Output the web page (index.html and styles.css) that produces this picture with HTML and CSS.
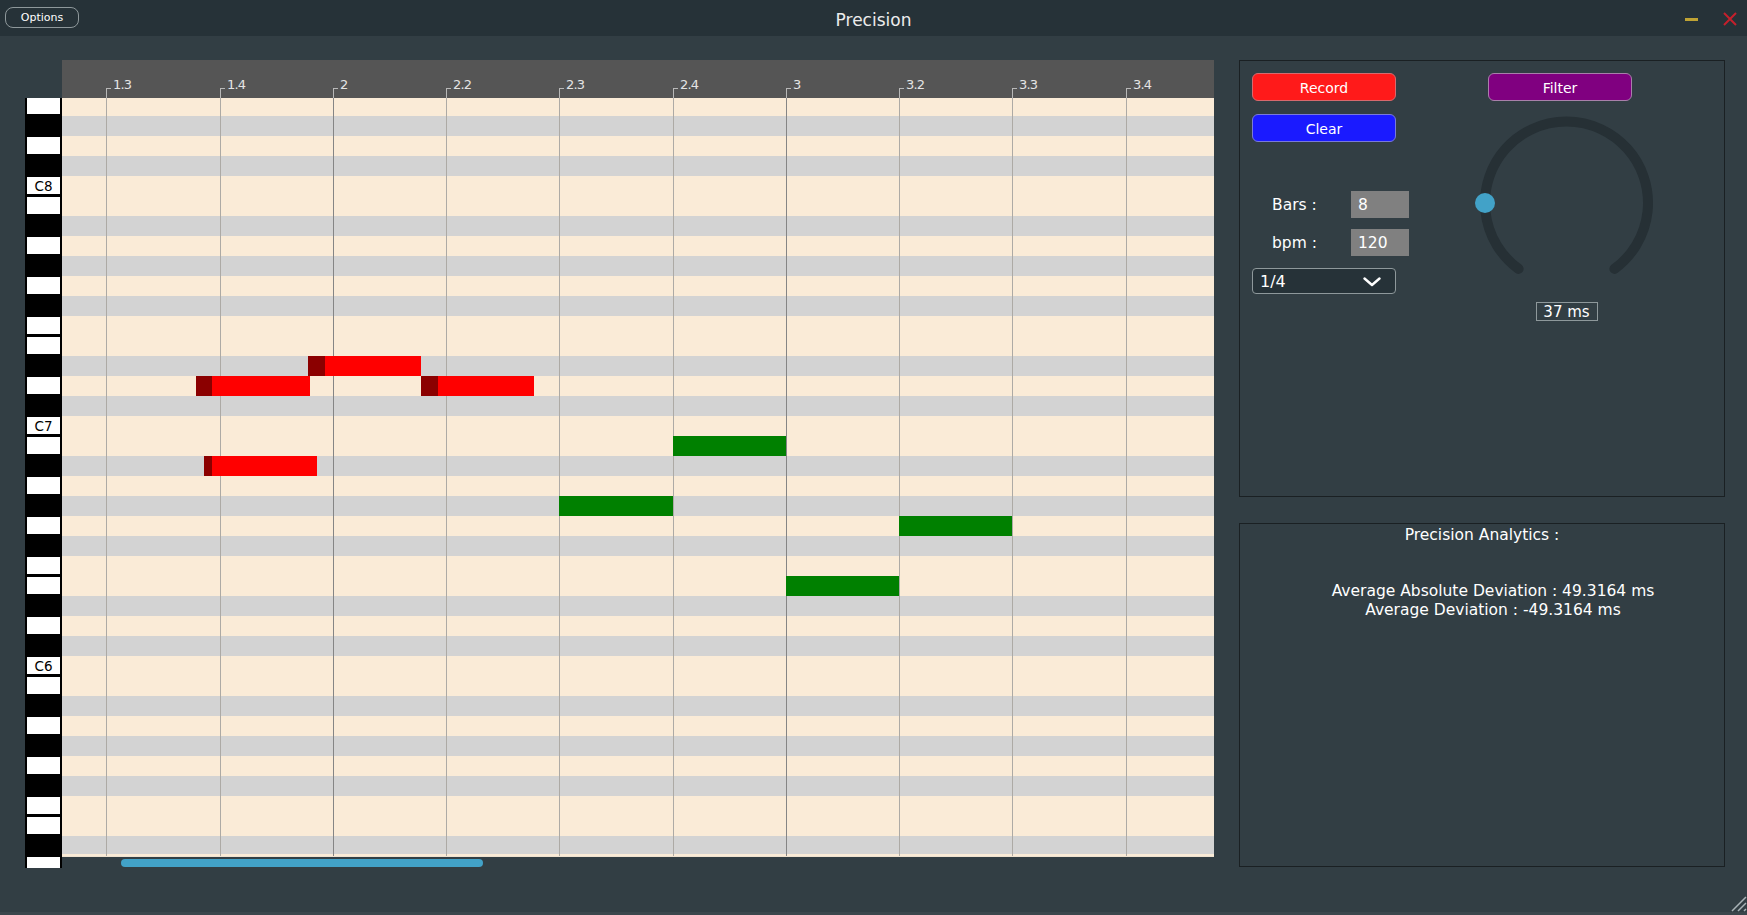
FILE: index.html
```html
<!DOCTYPE html>
<html>
<head>
<meta charset="utf-8">
<title>Precision</title>
<link rel="stylesheet" href="styles.css">
</head>
<body>
<div class="app">
  <header class="titlebar">
    <div class="tb-left"><button class="options">Options</button></div>
    <div class="title">Precision</div>
    <div class="tb-right">
      <span class="minimize"></span>
      <svg class="close" width="14" height="14" viewBox="0 0 14 14"><path d="M1 1 L13 13 M13 1 L1 13" stroke="#c4202c" stroke-width="2"/></svg>
    </div>
  </header>

  <main class="main">
    <section class="roll">
      <div class="corner"></div>
      <div class="ruler">
        <div class="tick" style="left:44px"><span>1.3</span></div>
        <div class="tick" style="left:158px"><span>1.4</span></div>
        <div class="tick" style="left:271px"><span>2</span></div>
        <div class="tick" style="left:384px"><span>2.2</span></div>
        <div class="tick" style="left:497px"><span>2.3</span></div>
        <div class="tick" style="left:611px"><span>2.4</span></div>
        <div class="tick" style="left:724px"><span>3</span></div>
        <div class="tick" style="left:837px"><span>3.2</span></div>
        <div class="tick" style="left:950px"><span>3.3</span></div>
        <div class="tick" style="left:1064px"><span>3.4</span></div>
      </div>
      <div class="keyboard">
        <div class="keys">
          <div class="k w"></div><div class="k b"></div><div class="k w"></div><div class="k b"></div>
          <div class="k w">C8</div><div class="k w"></div><div class="k b"></div><div class="k w"></div>
          <div class="k b"></div><div class="k w"></div><div class="k b"></div><div class="k w"></div>
          <div class="k w"></div><div class="k b"></div><div class="k w"></div><div class="k b"></div>
          <div class="k w">C7</div><div class="k w"></div><div class="k b"></div><div class="k w"></div>
          <div class="k b"></div><div class="k w"></div><div class="k b"></div><div class="k w"></div>
          <div class="k w"></div><div class="k b"></div><div class="k w"></div><div class="k b"></div>
          <div class="k w">C6</div><div class="k w"></div><div class="k b"></div><div class="k w"></div>
          <div class="k b"></div><div class="k w"></div><div class="k b"></div><div class="k w"></div>
          <div class="k w"></div><div class="k b"></div><div class="k w"></div>
        </div>
      </div>
      <div class="grid-wrap">
        <div class="grid">
          <div class="vline" style="left:44px"></div>
          <div class="vline" style="left:158px"></div>
          <div class="vline bar" style="left:271px"></div>
          <div class="vline" style="left:384px"></div>
          <div class="vline" style="left:497px"></div>
          <div class="vline" style="left:611px"></div>
          <div class="vline bar" style="left:724px"></div>
          <div class="vline" style="left:837px"></div>
          <div class="vline" style="left:950px"></div>
          <div class="vline" style="left:1064px"></div>

          <div class="note red" style="left:246px;top:258px;width:113px"><i style="width:17px"></i></div>
          <div class="note red" style="left:134px;top:278px;width:114px"><i style="width:16px"></i></div>
          <div class="note red" style="left:359px;top:278px;width:113px"><i style="width:17px"></i></div>
          <div class="note red" style="left:142px;top:358px;width:113px"><i style="width:8px"></i></div>

          <div class="note green" style="left:611px;top:338px;width:113px"></div>
          <div class="note green" style="left:497px;top:398px;width:114px"></div>
          <div class="note green" style="left:837px;top:418px;width:113px"></div>
          <div class="note green" style="left:724px;top:478px;width:113px"></div>
        </div>
        <div class="scrollbar"></div>
      </div>
    </section>

    <aside class="side">
      <div class="panel controls">
        <div class="col-left">
          <button class="btn record">Record</button>
          <button class="btn clear">Clear</button>
          <div class="field first"><label>Bars :</label><div class="input">8</div></div>
          <div class="field"><label>bpm :</label><div class="input">120</div></div>
          <div class="combo"><span>1/4</span>
            <svg width="18" height="10" viewBox="0 0 18 10"><path d="M1.5 1.5 L9 8 L16.5 1.5" fill="none" stroke="#fff" stroke-width="2.4" stroke-linecap="round" stroke-linejoin="round"/></svg>
          </div>
        </div>
        <div class="col-right">
          <button class="btn filter">Filter</button>
          <svg class="knob" width="185" height="190" viewBox="0 0 185 190">
            <path d="M44.6 161.9 A81.5 81.5 0 1 1 140.4 161.9" fill="none" stroke="#263035" stroke-width="10" stroke-linecap="round"/>
            <circle cx="11" cy="96" r="10" fill="#42a2c8"/>
          </svg>
          <div class="valuebox">37 ms</div>
        </div>
      </div>
      <div class="panel analytics">
        <div class="a-title">Precision Analytics :</div>
        <div class="a-body">
          <div>Average Absolute Deviation : 49.3164 ms</div>
          <div>Average Deviation : -49.3164 ms</div>
        </div>
      </div>
    </aside>
  </main>

  <svg class="resizer" width="20" height="20" viewBox="0 0 20 20">
    <path d="M19 5 L5 19 M19 11 L11 19 M19 17 L17 19" stroke="#a9b2b6" stroke-width="1.5"/>
  </svg>
</div>
</body>
</html>
```

FILE: styles.css
```css
* { box-sizing: border-box; }

html, body {
  margin: 0;
  padding: 0;
}

body {
  width: 1747px;
  height: 915px;
  overflow: hidden;
  background: #3b464c;
  font-family: "DejaVu Sans", "Liberation Sans", sans-serif;
  color: #fff;
}

.app {
  position: relative;
  width: 1747px;
  height: 912px;
  background: #323e44;
}

/* ---------- title bar ---------- */
.titlebar {
  height: 36px;
  background: #263238;
  display: grid;
  grid-template-columns: 1fr auto 1fr;
  align-items: center;
}

.tb-left { display: flex; align-items: center; padding-left: 5px; }

.options {
  width: 74px;
  height: 21px;
  margin-top: -2px;
  border: 1px solid #8e989b;
  border-radius: 8px;
  background: transparent;
  color: #fff;
  font-family: "DejaVu Sans", sans-serif;
  font-size: 11px;
  padding: 0;
}

.title {
  font-size: 17px;
  color: #ececec;
  margin-top: 3px;
}

.tb-right {
  display: flex;
  justify-content: flex-end;
  align-items: center;
  padding-right: 10px;
  gap: 25px;
}

.minimize {
  width: 13px;
  height: 3px;
  background: #bfa334;
  margin-top: 2px;
}

.close { display: block; margin-top: 2px; }

/* ---------- main ---------- */
.main {
  display: flex;
  padding: 24px 0 0 25px;
}

.roll {
  display: grid;
  grid-template-columns: 37px 1152px;
  grid-template-rows: 38px auto;
}

.ruler {
  position: relative;
  background: #555555;
  height: 38px;
}

.tick {
  position: absolute;
  top: 28px;
  height: 10px;
  border-left: 1px solid #b8b8b8;
}
.tick::before {
  content: "";
  position: absolute;
  left: 0;
  top: 0;
  width: 4px;
  height: 1px;
  background: #b8b8b8;
}
.tick span {
  position: absolute;
  left: 6px;
  top: -10px;
  font-size: 13px;
  line-height: 13px;
  color: #e4e4e4;
  letter-spacing: -0.8px;
  white-space: nowrap;
}

.keyboard {
  height: 770px;
  background: #000;
  overflow: hidden;
}

.keys {
  display: flex;
  flex-direction: column;
  margin-top: -2px;
}

.k { flex: none; }
.k.b { height: 20px; }
.k.w {
  height: 17px;
  margin: 1px 2px 2px 2px;
  background: #fff;
  color: #000;
  font-size: 13.5px;
  line-height: 18px;
  text-align: center;
}

.grid-wrap { display: flex; flex-direction: column; }

.grid {
  position: relative;
  height: 759px;
  overflow: hidden;
  background-image: repeating-linear-gradient(180deg,
    #faebd7 0px, #faebd7 20px,
    #d3d3d3 20px, #d3d3d3 40px,
    #faebd7 40px, #faebd7 60px,
    #d3d3d3 60px, #d3d3d3 80px,
    #faebd7 80px, #faebd7 120px,
    #d3d3d3 120px, #d3d3d3 140px,
    #faebd7 140px, #faebd7 160px,
    #d3d3d3 160px, #d3d3d3 180px,
    #faebd7 180px, #faebd7 200px,
    #d3d3d3 200px, #d3d3d3 220px,
    #faebd7 220px, #faebd7 240px);
  background-position: 0 -2px;
  border-bottom: 1px solid #efe2d0;
}

.vline {
  position: absolute;
  top: 0;
  bottom: 0;
  width: 1px;
  background: #adaaa5;
}
.vline.bar { background: #858585; }

.note {
  position: absolute;
  height: 20px;
  display: flex;
}
.note.red { background: #ff0000; }
.note.green { background: #008000; }
.note i { display: block; height: 100%; background: #8b0000; }

.scrollbar {
  margin: 2px 0 0 59px;
  width: 362px;
  height: 8px;
  border-radius: 4px;
  background: #42a2c8;
}

/* ---------- side panels ---------- */
.side {
  margin-left: 25px;
  width: 486px;
  display: flex;
  flex-direction: column;
}

.panel {
  border: 1px solid #1a2023;
  background: #323e44;
}

.controls {
  height: 437px;
  display: flex;
  padding: 12px 0 0 12px;
}

.col-left {
  width: 157px;
  display: flex;
  flex-direction: column;
}

.btn {
  width: 144px;
  height: 28px;
  border-radius: 6px;
  color: #fff;
  font-family: "DejaVu Sans", sans-serif;
  font-size: 14px;
  padding: 2px 0 0 0;
  border: 1px solid rgba(170, 176, 180, 0.75);
}
.record { background: #ff1a1a; border-color: #d76a6e; }
.clear { background: #1a1aff; border-color: #7a7ad8; margin-top: 13px; }
.filter { background: #800080; border-color: #a880aa; margin-left: 14px; }

.field {
  display: flex;
  align-items: center;
  height: 27px;
  margin-top: 11px;
}
.field.first { margin-top: 49px; }
.field label {
  width: 99px;
  padding-left: 20px;
  font-size: 15.5px;
  color: #fff;
}
.input {
  width: 58px;
  height: 27px;
  background: #808080;
  color: #fff;
  font-size: 15.5px;
  line-height: 28px;
  padding-left: 7px;
}

.combo {
  margin-top: 12px;
  width: 144px;
  height: 26px;
  border: 1px solid #8e989b;
  border-radius: 4px;
  background: #263238;
  display: flex;
  align-items: center;
  justify-content: space-between;
  padding: 1px 14px 0 7px;
  font-size: 16px;
}
.combo svg { display: block; margin-top: 1px; }

.col-right {
  margin-left: 65px;
  width: 185px;
  display: flex;
  flex-direction: column;
  align-items: flex-start;
}

.knob { display: block; margin-top: 6px; }

.valuebox {
  align-self: center;
  margin-top: 5px;
  width: 62px;
  height: 19px;
  border: 1px solid #8e989b;
  font-size: 15px;
  line-height: 18px;
  text-align: center;
  color: #fff;
}

.analytics {
  margin-top: 26px;
  height: 344px;
  text-align: center;
  font-size: 15.5px;
  color: #fff;
}
.a-title { line-height: 19px; padding-top: 2px; }
.a-body { margin-top: 37px; line-height: 19px; padding-left: 22px; }

.resizer {
  position: absolute;
  right: 0;
  bottom: 0;
}
```
